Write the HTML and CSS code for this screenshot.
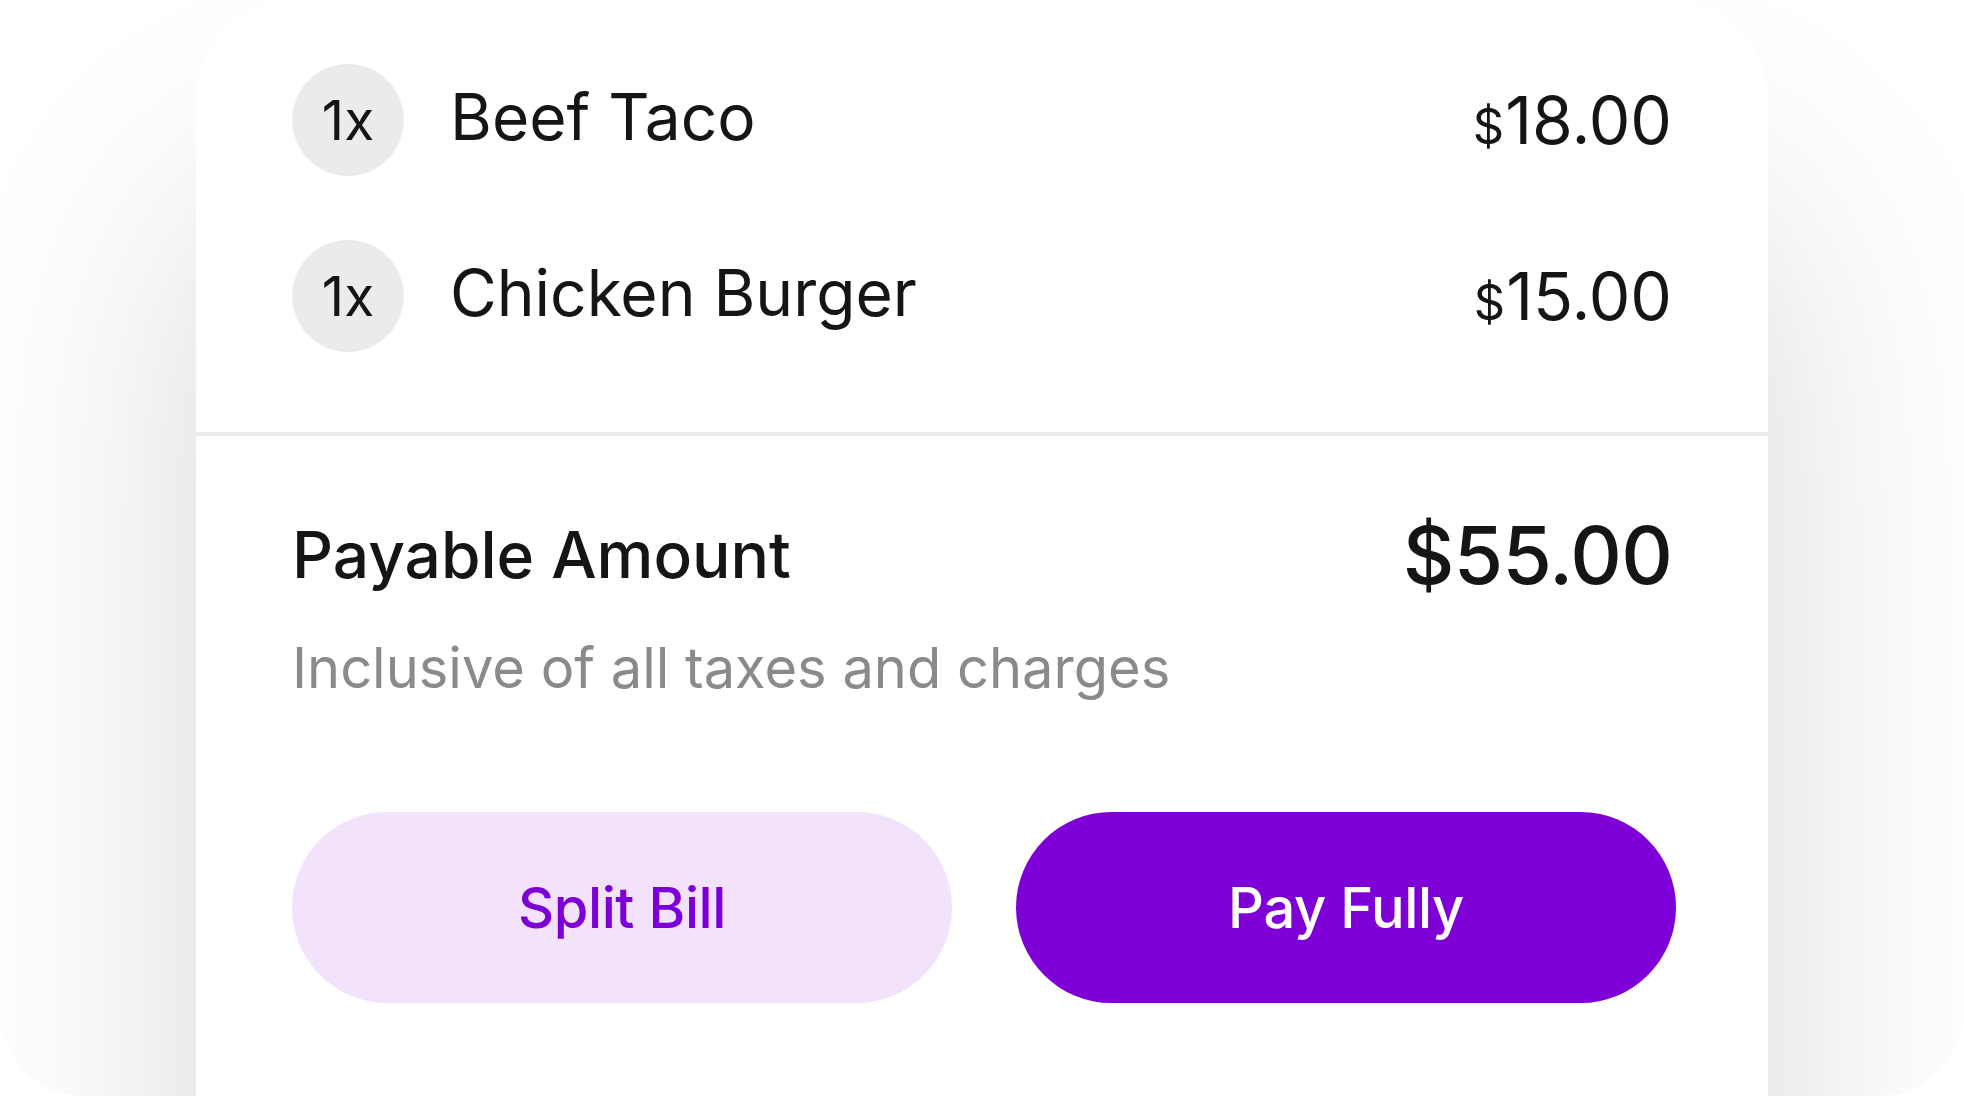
FILE: index.html
```html
<!DOCTYPE html>
<html lang="en">

<head>
  <meta charset="UTF-8">
  <meta name="viewport" content="width=device-width, initial-scale=1.0">
  <title>Order Summary</title>
  <link rel="stylesheet" href="styles.css">
</head>

<body>
  <div class="screen">
    <div class="sheet">
      <ul class="items">
        <li class="item">
          <span class="qty">1x</span>
          <span class="item-name">Beef Taco</span>
          <span class="item-price"><small>$</small>18.00</span>
        </li>
        <li class="item">
          <span class="qty">1x</span>
          <span class="item-name">Chicken Burger</span>
          <span class="item-price"><small>$</small>15.00</span>
        </li>
      </ul>

      <hr class="divider">

      <div class="summary">
        <div class="total-row">
          <h2>Payable Amount</h2>
          <span class="total">$55.00</span>
        </div>
        <p class="note">Inclusive of all taxes and charges</p>

        <div class="actions">
          <button class="btn btn-light">Split Bill</button>
          <button class="btn btn-primary">Pay Fully</button>
        </div>
      </div>
    </div>
  </div>
</body>

</html>
```

FILE: styles.css
```css
/* Base */
* {
  margin: 0;
  padding: 0;
  box-sizing: border-box;
}

body {
  font-family: Inter, "Noto Sans", sans-serif;
  background: #fff;
  color: #151515;
}

.screen {
  width: 1964px;
  height: 1096px;
  border-radius: 84px;
  overflow: hidden;
  background: #fff;
}

.sheet {
  margin-left: 196px;
  width: 1572px;
  height: 1400px;
  background: #fff;
  border-radius: 100px 100px 0 0;
  box-shadow: 0 200px 320px rgba(0, 0, 0, 0.16);
}

/* Items */
.items {
  list-style: none;
  padding: 64px 96px 0 96px;
  display: flex;
  flex-direction: column;
  gap: 64px;
}

.item {
  display: flex;
  align-items: center;
  height: 112px;
}

.qty {
  width: 112px;
  height: 112px;
  border-radius: 50%;
  background: #ebebeb;
  display: flex;
  align-items: center;
  justify-content: center;
  font-size: 55px;
  line-height: 1;
}

.item-name {
  margin-left: 46px;
  margin-bottom: 7px;
  font-size: 64px;
  line-height: 1;
  flex: 1;
}

.item-price {
  font-size: 66px;
  line-height: 1;
}

.item-price small {
  font-size: 0.74em;
  margin-right: 1px;
}

.divider {
  border: none;
  height: 4px;
  background: #ebebeb;
  margin-top: 80px;
}

/* Summary */
.summary {
  padding: 78px 96px 0 96px;
}

.total-row {
  display: flex;
  align-items: center;
  justify-content: space-between;
  height: 82px;
}

.total-row h2 {
  font-size: 64px;
  font-weight: 500;
  line-height: 1;
}

.total {
  font-size: 80px;
  font-weight: 500;
  line-height: 1;
  letter-spacing: -0.8px;
}

.note {
  margin-top: 44px;
  font-size: 56px;
  line-height: 1;
  color: #8a8a8a;
}

.actions {
  margin-top: 116px;
  margin-right: -4px;
  display: grid;
  grid-template-columns: 1fr 1fr;
  gap: 64px;
}

.btn {
  height: 191px;
  border: none;
  border-radius: 96px;
  font-family: inherit;
  font-size: 56px;
  font-weight: 500;
  letter-spacing: -0.4px;
  cursor: pointer;
}

.btn-light {
  background: #f2e2fc;
  color: #7c00d6;
}

.btn-primary {
  background: #7f00d6;
  color: #fff;
}
```
